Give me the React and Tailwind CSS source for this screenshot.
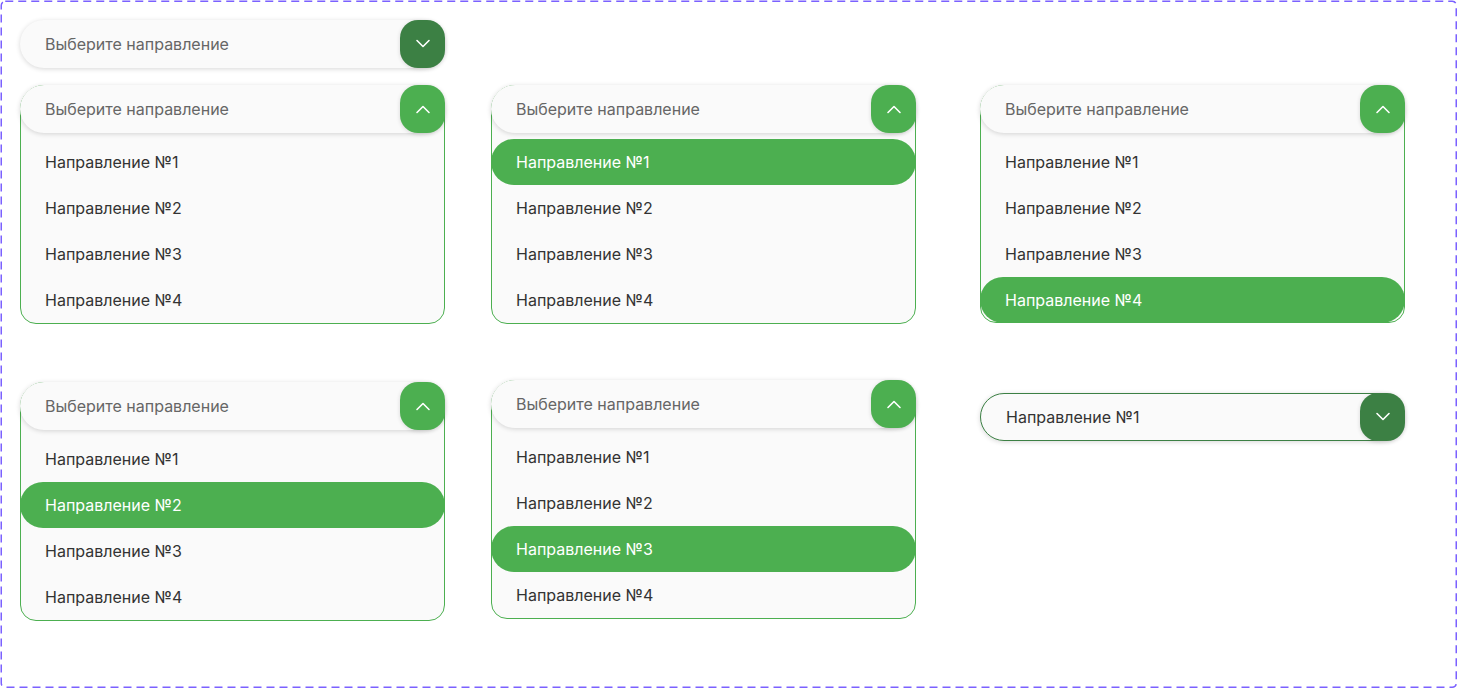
const items = ['Направление №1', 'Направление №2', 'Направление №3', 'Направление №4'];

const Chevron = ({ up }) => (
  <svg width="16" height="10" viewBox="0 0 16 10" fill="none">
    <path
      d={up ? 'M2 8.5L8 2.5L14 8.5' : 'M2 1.5L8 7.5L14 1.5'}
      stroke="white"
      strokeWidth="1.6"
      strokeLinecap="round"
      strokeLinejoin="round"
    />
  </svg>
);

const Header = ({ label, open, placeholder = true, dark, bordered }) => (
  <div
    className={`relative flex items-center h-[48px] rounded-full bg-[#fafafa] shadow-[0_1px_5px_rgba(0,0,0,0.16)] ${
      bordered ? 'border border-[#3c8044]' : ''
    }`}
  >
    <span className={`pl-[25px] text-[16px] ${placeholder ? 'text-[#666]' : 'text-[#333]'}`}>{label}</span>
    <div
      className={`absolute ${bordered ? '-right-px -top-px -bottom-px' : 'right-0 top-0 bottom-0'} w-[45px] rounded-[18px] flex items-center justify-center shadow-[0_1px_4px_rgba(0,0,0,0.14)] ${
        dark ? 'bg-[#3c8044]' : 'bg-[#4caf50]'
      }`}
    >
      <Chevron up={open} />
    </div>
  </div>
);

const Closed = ({ label = 'Выберите направление', placeholder = true, bordered = false }) => (
  <div className="w-[425px]">
    <Header label={label} placeholder={placeholder} dark bordered={bordered} />
  </div>
);

const Open = ({ selected }) => (
  <div className="w-[425px] rounded-t-[24px] rounded-b-[16px] border border-[#4caf50] bg-[#fafafa]">
    <div className="-mx-px -mt-px">
      <Header label="Выберите направление" open />
    </div>
    <div className="pt-[6px]">
      {items.map((item, i) =>
        i === selected ? (
          <div
            key={item}
            className={`-mx-px h-[46px] rounded-full bg-[#4caf50] flex items-center pl-[25px] text-[16px] text-white ${
              i === items.length - 1 ? '-mb-px' : ''
            }`}
          >
            {item}
          </div>
        ) : (
          <div key={item} className="h-[46px] flex items-center pl-[24px] text-[16px] text-[#333]">
            {item}
          </div>
        )
      )}
    </div>
  </div>
);

export default function App() {
  return (
    <div className="relative w-[1458px] h-[689px] bg-white font-['Inter','Noto_Sans',sans-serif]">
      <svg className="absolute inset-0 pointer-events-none" width="1458" height="689">
        <rect x="1.25" y="1.25" width="1455" height="686" rx="4" fill="none" stroke="#7b61ff" strokeWidth="1.5" strokeDasharray="8 5" />
      </svg>

      <div className="flex flex-col pt-[20px] pl-[20px]">
        <Closed />

        <div className="flex items-start mt-[17px]">
          <Open />
          <div className="ml-[46px]">
            <Open selected={0} />
          </div>
          <div className="ml-[64px]">
            <Open selected={3} />
          </div>
        </div>

        <div className="flex items-start mt-[56px]">
          <div className="mt-[2px]">
            <Open selected={1} />
          </div>
          <div className="ml-[46px]">
            <Open selected={2} />
          </div>
          <div className="ml-[64px] mt-[13px]">
            <Closed label="Направление №1" placeholder={false} bordered />
          </div>
        </div>
      </div>
    </div>
  );
}
